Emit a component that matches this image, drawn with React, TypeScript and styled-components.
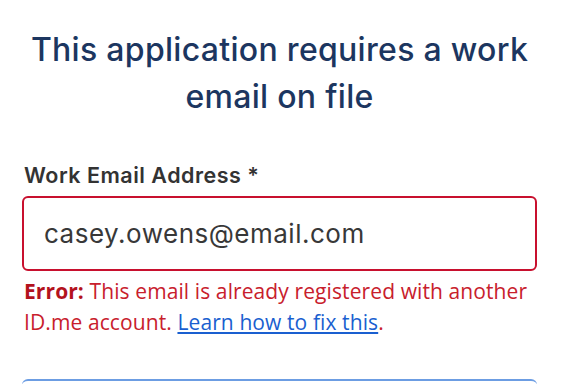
import React from "react";
import styled, { createGlobalStyle } from "styled-components";

const Global = createGlobalStyle`
  html, body {
    margin: 0;
    padding: 0;
    background: #ffffff;
    overflow: hidden;
  }
  * { box-sizing: border-box; }
`;

const Page = styled.main`
  width: 570px;
  height: 384px;
  padding: 26px 33px 0 22px;
  display: flex;
  flex-direction: column;
`;

const Heading = styled.h1`
  margin: 0;
  font-family: "Inter", "Liberation Sans", sans-serif;
  font-weight: 500;
  font-size: 32px;
  line-height: 47px;
  letter-spacing: 0.3px;
  color: #1c3660;
  text-align: center;
`;

const Field = styled.div`
  margin-top: 41px;
  display: flex;
  flex-direction: column;
`;

const Label = styled.label`
  font-family: "Inter", "Liberation Sans", sans-serif;
  font-weight: 600;
  font-size: 21.5px;
  line-height: 28px;
  letter-spacing: 0.5px;
  color: #333333;
  padding-left: 2px;
`;

const Input = styled.input<{ $invalid?: boolean }>`
  margin-top: 7px;
  width: 515px;
  height: 75px;
  border: 2px solid ${(p) => (p.$invalid ? "#c8102e" : "#8a8a8a")};
  border-radius: 6px;
  padding: 0 0 0 20px;
  font-family: "Inter", "Liberation Sans", sans-serif;
  font-size: 26px;
  font-weight: 400;
  letter-spacing: 0.5px;
  color: #383838;
  background: #ffffff;
  outline: none;
`;

const ErrorText = styled.p`
  margin: 5px 0 0 0;
  padding-left: 2px;
  font-family: "Open Sans", "Liberation Sans", sans-serif;
  font-size: 21px;
  line-height: 31px;
  letter-spacing: 0.1px;
  color: #c8202c;
`;

const ErrorLead = styled.strong`
  font-weight: 700;
  color: #b3121d;
`;

const HelpLink = styled.a`
  color: #1a5fd0;
  text-decoration: underline;
  text-underline-offset: 2px;
`;

const PrimaryButton = styled.button`
  margin-top: 41px;
  width: 515px;
  height: 56px;
  flex-shrink: 0;
  border: none;
  border-top: 2px solid #6c9de3;
  border-radius: 6px;
  background: #ffffff;
`;

export default function App() {
  return (
    <>
      <Global />
      <Page>
        <Heading>
          This application requires a work
          <br />
          email on file
        </Heading>
        <Field>
          <Label htmlFor="work-email">Work Email Address *</Label>
          <Input
            id="work-email"
            type="email"
            $invalid
            defaultValue="casey.owens@email.com"
          />
          <ErrorText>
            <ErrorLead>Error:</ErrorLead> This email is already registered with another
            ID.me account. <HelpLink href="#">Learn how to fix this</HelpLink>.
          </ErrorText>
        </Field>
        <PrimaryButton type="button" aria-label="Continue" />
      </Page>
    </>
  );
}
